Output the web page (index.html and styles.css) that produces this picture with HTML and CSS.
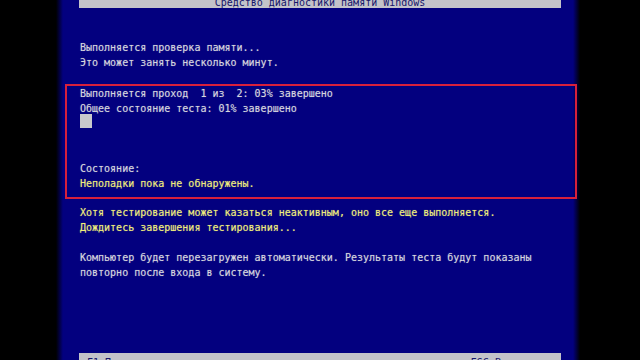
FILE: index.html
```html
<!DOCTYPE html>
<html lang="ru">

<head>
  <meta charset="UTF-8">
  <title>Средство диагностики памяти Windows</title>
  <link rel="stylesheet" href="styles.css">
</head>

<body>
  <div class="screen">
    <!-- title -->
    <div class="bar title">Средство диагностики памяти Windows</div>

    <div class="lines intro">
      <p>Выполняется проверка памяти...</p>
      <p>Это может занять несколько минут.</p>
    </div>

    <!-- progress -->
    <div class="frame">
      <p>Выполняется проход  1 из  2: 03% завершено</p>
      <p>Общее состояние теста: 01% завершено</p>
      <p><span class="cursor"></span></p>
      <p>&nbsp;</p>
      <p>&nbsp;</p>
      <p>Состояние:</p>
      <p class="warn">Неполадки пока не обнаружены.</p>
    </div>

    <div class="lines after">
      <p class="warn">Хотя тестирование может казаться неактивным, оно все еще выполняется.</p>
      <p class="warn">Дождитесь завершения тестирования...</p>
      <p>&nbsp;</p>
      <p>Компьютер будет перезагружен автоматически. Результаты теста будут показаны</p>
      <p>повторно после входа в систему.</p>
    </div>

    <!-- status bar -->
    <div class="bar footer">
      <span>F1=Параметры</span>
      <span>ESC=Выход</span>
    </div>
  </div>
</body>

</html>
```

FILE: styles.css
```css
html,
body {
  margin: 0;
  height: 360px;
  overflow: hidden;
  background: #000;
}

p {
  margin: 0;
  white-space: pre;
}

.screen {
  display: flex;
  flex-direction: column;
  width: 524px;
  height: 368px;
  margin-left: 56px;
  background: linear-gradient(to right, #000 0, #03007f 7px, #03007f 517px, #000 524px);
  font-family: "DejaVu Sans Mono", "Liberation Mono", monospace;
  font-size: 10px;
  line-height: 15px;
  color: #d6d6de;
  text-shadow: 0 0 1px rgba(214, 214, 222, 0.5);
}

/* grey bars */
.bar {
  flex: none;
  width: 482px;
  margin-left: 23px;
  background: #c3c3c9;
  color: #14146a;
  text-shadow: none;
}

.title {
  height: 13px;
  margin-top: -5px;
  line-height: 16px;
  text-align: center;
}

.footer {
  display: flex;
  justify-content: space-between;
  height: 15px;
  margin-top: auto;
  padding: 0 36px 0 8px;
  box-sizing: border-box;
  line-height: 19px;
}

/* text blocks */
.lines {
  padding-left: 24px;
}

.intro {
  margin-top: 32px;
}

.after {
  margin-top: 6px;
}

.frame {
  width: 512px;
  margin: 14px 0 0 9px;
  padding: 0 0 6px 13px;
  box-sizing: border-box;
  border: 2px solid #d8203c;
}

.warn {
  color: #f0ee7c;
  text-shadow: 0 0 1px rgba(240, 238, 124, 0.5);
}

.cursor {
  display: inline-block;
  width: 12px;
  height: 14px;
  margin-top: -2px;
  vertical-align: top;
  background: #c8c8cc;
}
```
